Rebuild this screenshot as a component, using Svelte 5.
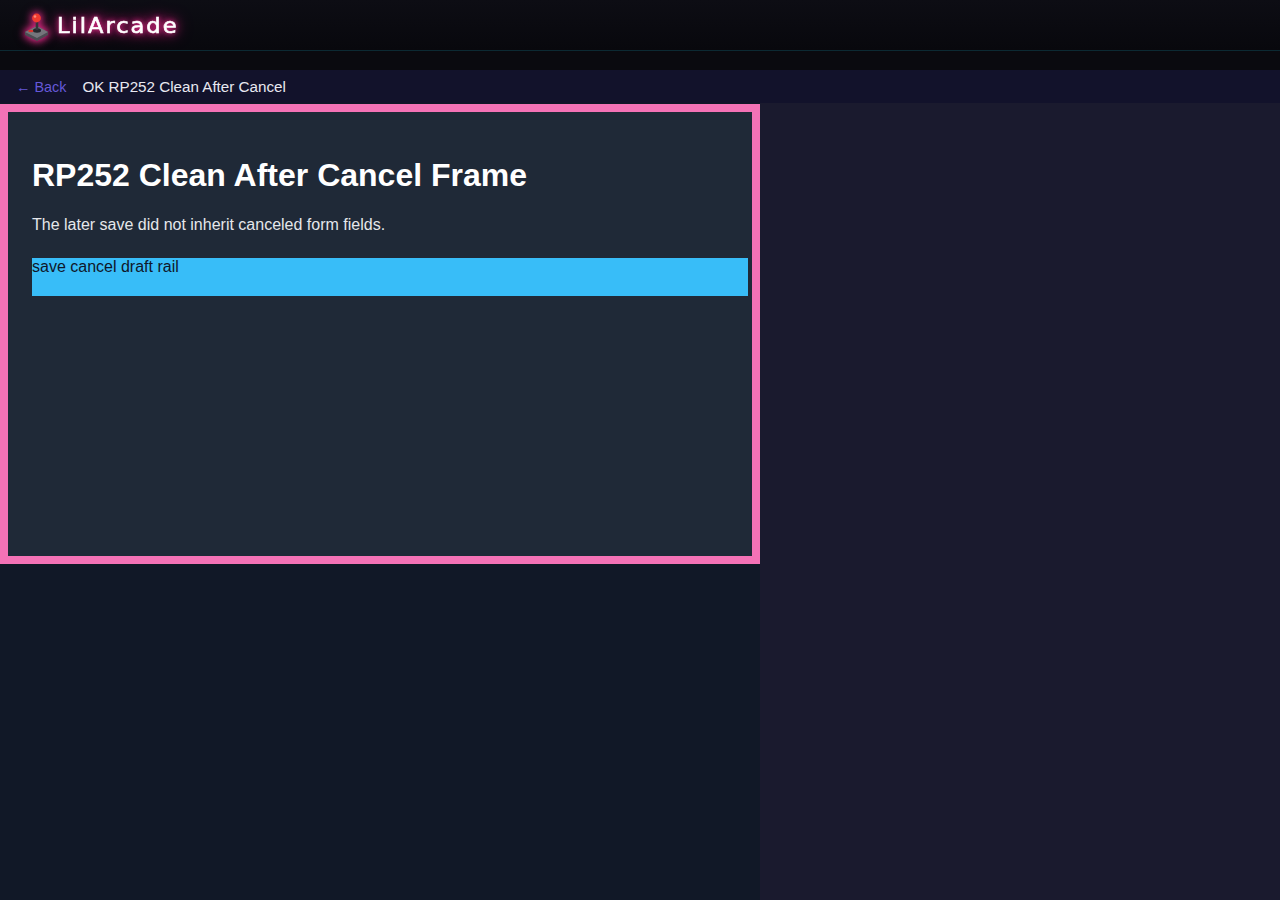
<script>
  const title = 'RP252 Clean After Cancel';
</script>

<div class="page">
  <header class="topbar">
    <a class="logo" href="#home">
      <svg class="logo-icon" viewBox="0 0 28 32" width="28" height="32" aria-hidden="true">
        <path d="M1 23 L13 17 L24 23 L24 26 L13 32 L1 26 Z" fill="#4c4d53" />
        <path d="M1 23 L13 17 L24 23 L13 29 Z" fill="#75767c" />
        <ellipse cx="7" cy="22" rx="2.8" ry="1.3" fill="#d8342c" />
        <ellipse cx="13" cy="21.5" rx="4" ry="2.2" fill="#26272c" />
        <rect x="11.7" y="11" width="2.6" height="10" fill="#33343a" />
        <circle cx="12.5" cy="9" r="4.4" fill="#ef3b30" />
        <circle cx="11" cy="7.5" r="1.3" fill="#ff8a78" />
      </svg>
      <span class="logo-text">LilArcade</span>
    </a>
  </header>

  <nav class="crumbs">
    <a class="back" href="#back">← Back</a>
    <span class="crumb-title">OK {title}</span>
  </nav>

  <div class="split">
    <main class="stage">
      <section class="frame">
        <h1>{title} Frame</h1>
        <p>The later save did not inherit canceled form fields.</p>
        <div class="rail">save cancel draft rail</div>
      </section>
    </main>
    <aside class="side"></aside>
  </div>
</div>

<style>
  :global(body) {
    margin: 0;
    background: #0a0a0f;
    font-family: "Liberation Sans", Arial, sans-serif;
  }

  .page {
    display: flex;
    flex-direction: column;
    height: 900px;
    overflow: hidden;
  }

  .topbar {
    display: flex;
    align-items: center;
    height: 50px;
    padding: 0 24px;
    margin-bottom: 19px;
    border-bottom: 1px solid #0c2a33;
    background: linear-gradient(180deg, #0d0d14, #08080d);
  }

  .logo {
    display: flex;
    align-items: center;
    gap: 5px;
    text-decoration: none;
  }

  .logo-icon {
    filter: drop-shadow(0 0 4px #ff2d95) drop-shadow(0 0 3px #ff2d9580);
  }

  .logo-text {
    font-family: "DejaVu Sans", sans-serif;
    font-size: 20.5px;
    line-height: 24px;
    padding-top: 2px;
    font-weight: 400;
    letter-spacing: 1.8px;
    -webkit-text-stroke: 0.6px #fff;
    color: #fff;
    text-shadow: 0 0 5px #ff2d95, 0 0 10px #ff2d95, 0 0 16px #ff2d95;
    transform: scaleX(1.1);
    transform-origin: left center;
  }

  .crumbs {
    display: flex;
    align-items: center;
    gap: 16px;
    height: 33px;
    padding: 0 16px;
    background: #12122b;
    font-size: 15.2px;
  }

  .back {
    color: #6558d8;
    text-decoration: none;
    font-size: 14.4px;
  }

  .crumb-title {
    color: #e8e8f0;
  }

  .split {
    display: flex;
    flex: 1;
    min-height: 0;
  }

  .stage {
    width: 760px;
    padding-top: 1px;
    background: #111827;
  }

  .frame {
    box-sizing: border-box;
    height: 460px;
    padding: 24px;
    border: 8px solid #f472b6;
    background: #1f2937;
    color: #fff;
  }

  h1 {
    margin: 21px 0 22px;
    font-size: 32px;
    line-height: 37px;
  }

  p {
    margin: 0 0 24px;
    font-size: 16px;
    line-height: 18px;
    color: #e5e7eb;
  }

  .rail {
    width: 716px;
    height: 38px;
    background: #38bdf8;
    color: #0f172a;
    font-size: 16px;
    line-height: 18px;
  }

  .side {
    flex: 1;
    background: #1a1a2e;
  }
</style>
